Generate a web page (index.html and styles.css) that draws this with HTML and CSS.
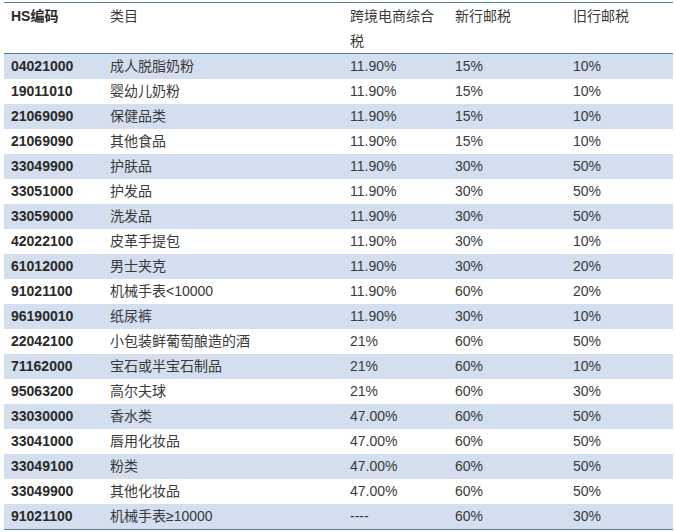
FILE: index.html
```html
<!DOCTYPE html>
<html lang="zh">
<head>
<meta charset="utf-8">
<link rel="stylesheet" href="styles.css">
</head>
<body>
<table class="tax">
  <colgroup>
    <col class="c1"><col class="c2"><col class="c3"><col class="c4"><col class="c5">
  </colgroup>
  <thead>
    <tr>
      <th class="code">HS编码</th>
      <th>类目</th>
      <th class="wrap">跨境电商综合税</th>
      <th>新行邮税</th>
      <th>旧行邮税</th>
    </tr>
  </thead>
  <tbody>
    <tr class="alt"><td class="code">04021000</td><td>成人脱脂奶粉</td><td>11.90%</td><td>15%</td><td>10%</td></tr>
    <tr><td class="code">19011010</td><td>婴幼儿奶粉</td><td>11.90%</td><td>15%</td><td>10%</td></tr>
    <tr class="alt"><td class="code">21069090</td><td>保健品类</td><td>11.90%</td><td>15%</td><td>10%</td></tr>
    <tr><td class="code">21069090</td><td>其他食品</td><td>11.90%</td><td>15%</td><td>10%</td></tr>
    <tr class="alt"><td class="code">33049900</td><td>护肤品</td><td>11.90%</td><td>30%</td><td>50%</td></tr>
    <tr><td class="code">33051000</td><td>护发品</td><td>11.90%</td><td>30%</td><td>50%</td></tr>
    <tr class="alt"><td class="code">33059000</td><td>洗发品</td><td>11.90%</td><td>30%</td><td>50%</td></tr>
    <tr><td class="code">42022100</td><td>皮革手提包</td><td>11.90%</td><td>30%</td><td>10%</td></tr>
    <tr class="alt"><td class="code">61012000</td><td>男士夹克</td><td>11.90%</td><td>30%</td><td>20%</td></tr>
    <tr><td class="code">91021100</td><td>机械手表&lt;10000</td><td>11.90%</td><td>60%</td><td>20%</td></tr>
    <tr class="alt"><td class="code">96190010</td><td>纸尿裤</td><td>11.90%</td><td>30%</td><td>10%</td></tr>
    <tr><td class="code">22042100</td><td>小包装鲜葡萄酿造的酒</td><td>21%</td><td>60%</td><td>50%</td></tr>
    <tr class="alt"><td class="code">71162000</td><td>宝石或半宝石制品</td><td>21%</td><td>60%</td><td>10%</td></tr>
    <tr><td class="code">95063200</td><td>高尔夫球</td><td>21%</td><td>60%</td><td>30%</td></tr>
    <tr class="alt"><td class="code">33030000</td><td>香水类</td><td>47.00%</td><td>60%</td><td>50%</td></tr>
    <tr><td class="code">33041000</td><td>唇用化妆品</td><td>47.00%</td><td>60%</td><td>50%</td></tr>
    <tr class="alt"><td class="code">33049100</td><td>粉类</td><td>47.00%</td><td>60%</td><td>50%</td></tr>
    <tr><td class="code">33049900</td><td>其他化妆品</td><td>47.00%</td><td>60%</td><td>50%</td></tr>
    <tr class="alt last"><td class="code">91021100</td><td>机械手表≥10000</td><td>----</td><td>60%</td><td>30%</td></tr>
  </tbody>
</table>
</body>
</html>
```
FILE: styles.css
```css
html, body {
  margin: 0;
  padding: 0;
  background: #ffffff;
}

body {
  font-family: "Liberation Sans", Arial, "Noto Sans CJK SC", sans-serif;
  font-size: 14px;
  color: #3a3a3a;
}

.tax {
  margin: 2px 0 0 4px;
  width: 669px;
  border-collapse: collapse;
  table-layout: fixed;
}

.c1 { width: 99px; }
.c2 { width: 240px; }
.c3 { width: 105px; }
.c4 { width: 118px; }
.c5 { width: 107px; }

.tax thead tr {
  border-top: 1px solid #5a78a3;
  border-bottom: 1px solid #5a78a3;
}

.tax th {
  text-align: left;
  font-weight: normal;
  vertical-align: top;
  padding: 1px 8px 0 7px;
  height: 49px;
  line-height: 24.5px;
  color: #3a3a3a;
}

.tax th.code {
  font-weight: bold;
  color: #2a2a2a;
}

.tax th.wrap {
  padding-right: 12px;
}

.tax td {
  height: 25px;
  padding: 0 4px 0 7px;
  line-height: 25px;
  white-space: nowrap;
  vertical-align: middle;
}

.tax td.code {
  font-weight: bold;
  color: #2a2a2a;
}

.tax tr.alt td {
  background: #d3deee;
}

.tax tr.last {
  border-bottom: 1px solid #5a78a3;
}
```
